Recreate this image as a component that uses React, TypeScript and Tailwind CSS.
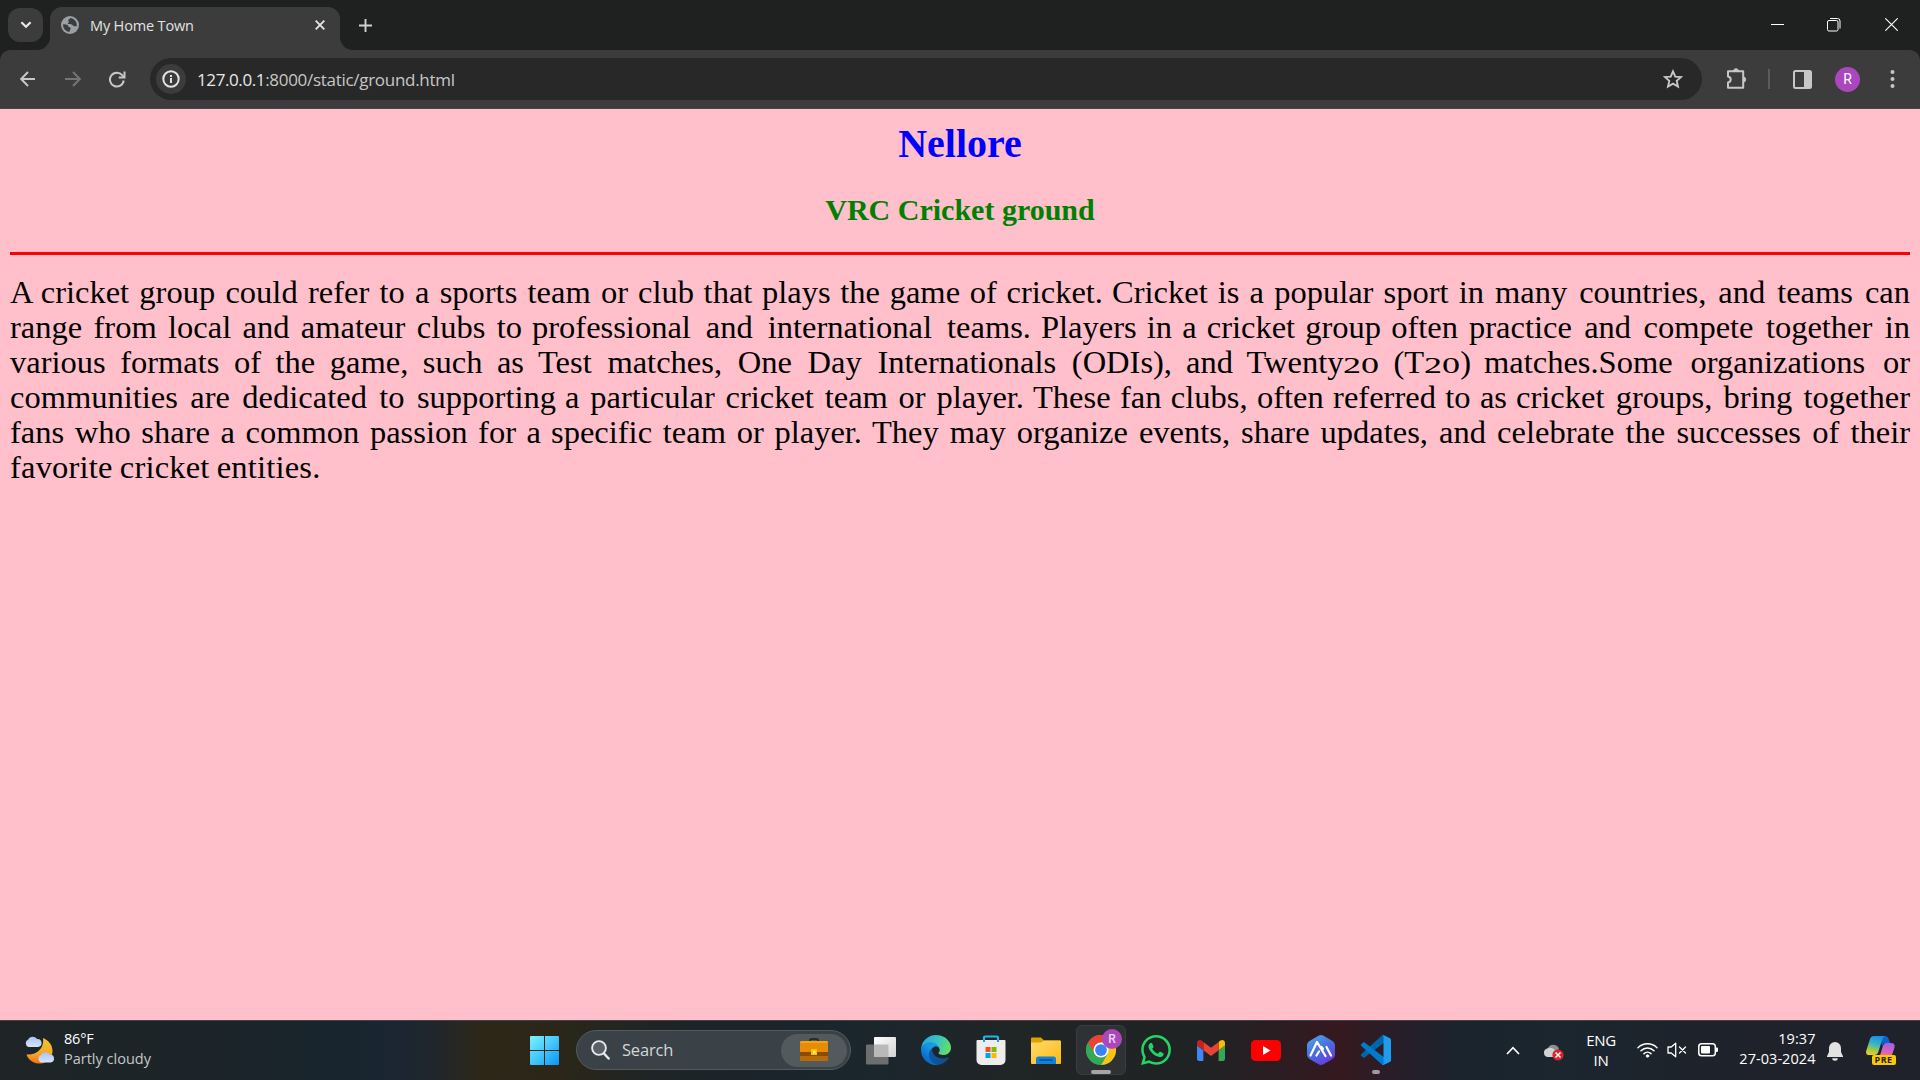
import React from "react";

type Segment = { cls: string; text: React.ReactNode };

const lines: Segment[][] = [
  [
    { cls: "w-[618px] mr-[10px]", text: <><span className="mr-[-3px]">A</span> cricket group could refer to a sports team or </> },
    { cls: "w-[465px] mr-[9px]", text: "club that plays the game of cricket. " },
    { cls: "w-[372px] mr-[11px]", text: "Cricket is a popular sport in " },
    { cls: "flex-1", text: "many countries, and teams can" },
  ],
  [
    { cls: "w-[512px] mr-[10px]", text: "range from local and amateur clubs to " },
    { cls: "w-[499px] mr-[10px]", text: "professional and international teams. " },
    { cls: "w-[417px] mr-[11px]", text: "Players in a cricket group often " },
    { cls: "flex-1", text: "practice and compete together in" },
  ],
  [
    { cls: "w-[514px] mr-[14px]", text: "various formats of the game, such as " },
    { cls: "w-[634px] mr-[14px]", text: "Test matches, One Day Internationals (ODIs), " },
    { cls: "w-[285px] mr-[13px]", text: <>and Twenty<Old /> (T<Old />) </> },
    { cls: "flex-1", text: "matches.Some organizations or" },
  ],
  [
    { cls: "w-[546px] mr-[9px]", text: "communities are dedicated to supporting " },
    { cls: "w-[459px] mr-[9px]", text: "a particular cricket team or player. " },
    { cls: "w-[474px] mr-[9px]", text: "These fan clubs, often referred to as " },
    { cls: "flex-1", text: "cricket groups, bring together" },
  ],
  [
    { cls: "w-[531px] mr-[10px]", text: "fans who share a common passion for a " },
    { cls: "w-[311px] mr-[10px]", text: "specific team or player. " },
    { cls: "w-[556px] mr-[11px]", text: "They may organize events, share updates, " },
    { cls: "flex-1", text: "and celebrate the successes of their" },
  ],
];

function Old() {
  return <span className="inline-block w-[36px] origin-bottom-left text-left [text-align-last:left]"><span className="inline-block origin-left scale-x-150 text-[24px] leading-none">20</span></span>;
}

function TabStrip() {
  return (
    <div className="flex h-[50px] bg-[#1f2120] pl-2">
      <div className="mt-2 flex h-[34px] w-[35px] items-center justify-center rounded-xl bg-[#3c3c3c]">
        <svg width="12" height="8" viewBox="0 0 12 8" fill="none" stroke="#e8e8e8" strokeWidth="2.2"><path d="M1.4 1.2 6 5.8l4.6-4.6" /></svg>
      </div>
      <div className="relative ml-[7px] mt-[7px] flex h-[43px] w-[290px] items-center rounded-t-[12px] bg-[#3c3c3c] pb-[7px] pl-[11px] pr-[15px]">
        <svg className="absolute -left-[13px] bottom-0" width="13" height="13"><path d="M13 0v13H0A13 13 0 0 0 13 0Z" fill="#3c3c3c" /></svg>
        <svg className="absolute -right-[13px] bottom-0" width="13" height="13"><path d="M0 0v13h13A13 13 0 0 1 0 0Z" fill="#3c3c3c" /></svg>
        <svg width="18" height="18" viewBox="0 0 18 18">
          <circle cx="9" cy="9" r="9" fill="#9aa0a6" />
          <path d="M2 8.3c2 .1 3.4-.1 4.7 1 .8.8.6 1.8 1.8 2 1 .2 1.400.7 1 1.700-.4 1-1 1.700-1 3A7.200 7.200 0 0 1 2 8.300ZM9.200 2c-.2 1.300-2 1-2 2.300 0 1 .8 1.200.6 2-.2.700-1.300.6-1 1.400.4 1 2.700.3 3.900.8 1.300.6 1.300 1.800 2.700 1.800 1 0 1.800-.3 2.500-.1A7.200 7.200 0 0 0 9.200 2Z" fill="#3c3c3c" />
        </svg>
        <span className="ml-[11px] mt-[2px] flex-1 whitespace-nowrap text-[14.500px] tracking-[-0.15px] text-[#e3e3e3]">My Home Town</span>
        <svg width="10" height="10" viewBox="0 0 10 10" stroke="#e3e3e3" strokeWidth="1.900"><path d="m.7.7 8.600 8.600M9.300.7.7 9.300" /></svg>
      </div>
      <svg className="ml-[19px] mt-[19px]" width="13" height="13" viewBox="0 0 13 13" stroke="#d0d0d0" strokeWidth="1.900"><path d="M6.500 0v13M0 6.500h13" /></svg>
      <div className="ml-auto flex items-start">
        <svg className="mr-[43px] mt-[24px]" width="13" height="1"><path d="M0 0h13v1H0z" fill="#fff" /></svg>
        <svg className="mr-[44px] mt-[18px]" width="14" height="14" viewBox="0 0 14 14" fill="none" stroke="#fff" strokeWidth="1"><rect x=".5" y="2.500" width="10.500" height="10.500" rx="1.500" /><path d="M3 .5h7.500a2.500 2.500 0 0 1 2.500 2.500v7.500" /></svg>
        <svg className="mr-[22px] mt-[18px]" width="13" height="13" viewBox="0 0 13 13" stroke="#fff" strokeWidth="1.100"><path d="m.3.3 12.400 12.400M12.700.3.3 12.700" /></svg>
      </div>
    </div>
  );
}

function Toolbar() {
  return (
    <div className="bg-[#1f2120]">
      <div className="flex h-[59px] items-center rounded-t-[10px] border-b border-[#464646] bg-[#3c3c3c] pl-5">
        <svg width="16" height="16" viewBox="0 0 16 16" fill="none" stroke="#c7c7c7" strokeWidth="2"><path d="M15 8H1.500M8 1 1.200 8 8 15" /></svg>
        <svg className="ml-[29px]" width="16" height="16" viewBox="0 0 16 16" fill="none" stroke="#757575" strokeWidth="2"><path d="M0 8h14.500M8 1l6.800 7L8 15" /></svg>
        <svg className="ml-[28px]" width="17" height="17" viewBox="0 0 17 17" fill="none" stroke="#c7c7c7" strokeWidth="2"><path d="M14.700 9.500A6.900 6.900 0 1 1 13.200 4.200L15 6.200" /><path d="M15.500.5v6H9.800" /></svg>
        <div className="ml-6 flex h-[42px] w-[1552px] items-center rounded-full bg-[#282828] pl-[6px] pr-[19px]">
          <div className="flex h-[30px] w-[30px] items-center justify-center rounded-full bg-[#3c3c3c]">
            <svg width="18" height="18" viewBox="0 0 18 18" fill="none" stroke="#e3e3e3" strokeWidth="2"><circle cx="9" cy="9" r="7.700" /><path d="M9 8v5M9 5v2" /></svg>
          </div>
          <span className="ml-[11px] mt-px flex-1 whitespace-nowrap text-[17px] tracking-[-0.29px] text-[#c7c7c7]"><span className="tracking-[-0.4px] text-[#e8e8e8]">127.0.0.1</span>:8000/static/ground.html</span>
          <svg width="20" height="20" viewBox="0 0 20 20" fill="none" stroke="#c7c7c7" strokeWidth="1.900"><path d="m10 2.300 2.300 5.300 5.700.5-4.300 3.800 1.300 5.700-5-3-5 3 1.300-5.700L2 8.100l5.700-.5z" /></svg>
        </div>
        <svg className="ml-6" width="22" height="22" viewBox="0 0 22 22" fill="none" stroke="#c7c7c7" strokeWidth="2"><path d="M2 3.200h15.200v16.600H2v-5.300c3.600-.6 3.600-5.400 0-6z" strokeLinejoin="round" /><path d="M7.500 3a2.500 2.200 0 0 1 5 0zM17.500 9a2.200 2.500 0 0 1 0 5z" fill="#c7c7c7" strokeWidth="1" /></svg>
        <div className="ml-[20px] h-5 w-[2px] bg-[#5c5c5c]" />
        <svg className="ml-[23px]" width="19" height="19" viewBox="0 0 19 19"><rect x="1" y="1" width="17" height="17" rx="1.500" fill="none" stroke="#c7c7c7" strokeWidth="2" /><path d="M11 1h7v17h-7z" fill="#c7c7c7" /></svg>
        <div className="ml-[23px] flex h-[25px] w-[25px] items-center justify-center rounded-full bg-[#ab47bc] font-[Roboto] text-[14px] text-white">R</div>
        <svg className="ml-[30px]" width="5" height="18" viewBox="0 0 5 18" fill="#c7c7c7"><circle cx="2.500" cy="2" r="2" /><circle cx="2.500" cy="9" r="2" /><circle cx="2.500" cy="16" r="2" /></svg>
      </div>
    </div>
  );
}

function Page() {
  return (
    <main className="h-[911px] bg-[#ffc0cb] px-[10px] font-['Liberation_Serif',serif] text-black">
      <h1 className="pt-[12px] text-center text-[40px] font-bold leading-[46px] text-[#0000ff]">Nellore</h1>
      <h2 className="mt-[26px] text-center text-[30px] font-bold leading-[34px] text-[#008000]">VRC Cricket ground</h2>
      <div className="mt-[25px] h-[3px] bg-[#ff0000]" />
      <div className="mt-5 text-[32.5px] leading-[35px]">
        {lines.map((segments, i) => (
          <div key={i} className="flex h-[35px]">
            {segments.map((s, j) => (
              <div key={j} className={`shrink-0 whitespace-nowrap text-justify [text-align-last:justify] ${s.cls}`}>{s.text}</div>
            ))}
          </div>
        ))}
        <div className="h-[35px] tracking-[0.2px] [word-spacing:-1.2px]">favorite cricket entities.</div>
      </div>
    </main>
  );
}

function Slot({ children }: { children: React.ReactNode }) {
  return <div className="flex h-full w-[55px] shrink-0 items-center justify-center">{children}</div>;
}

function Weather() {
  return (
    <svg width="31" height="30" viewBox="0 0 31 30">
      <defs>
        <linearGradient id="moon" x1="0" y1="0" x2="0" y2="1"><stop stopColor="#f0c52f" /><stop offset=".6" stopColor="#f3aa2c" /><stop offset="1" stopColor="#f0701a" /></linearGradient>
        <linearGradient id="cloud" x1="0" y1="0" x2="0" y2="1"><stop stopColor="#a8c4f5" /><stop offset="1" stopColor="#d6e4fb" /></linearGradient>
      </defs>
      <path d="M19 3C26 6 30 12 28 19.500 25.500 28 16 30.500 9 27 5.500 25.200 3.500 22.500 2.500 19.500 13 20.500 20.500 13 19 3Z" fill="url(#moon)" />
      <path d="M4.500 12a4 4 0 0 1-.3-7.500A5.200 5.200 0 0 1 13 4a4 4 0 0 1 1 8Z" fill="url(#cloud)" />
      <path d="M17 27.500a4 4 0 0 1 0-7.500 5 5 0 0 1 8.500-.5 4 4 0 0 1 1 8Z" fill="url(#cloud)" />
    </svg>
  );
}

function Windows() {
  return (
    <svg width="29" height="29" viewBox="0 0 29 29">
      <defs><linearGradient id="win" gradientUnits="userSpaceOnUse" x1="0" y1="0" x2="29" y2="29"><stop stopColor="#7df2ff" /><stop offset=".5" stopColor="#43c8fb" /><stop offset="1" stopColor="#0a93f5" /></linearGradient></defs>
      <path d="M1 0h13v14H0V1a1 1 0 0 1 1-1ZM15 0h13a1 1 0 0 1 1 1v13H15ZM0 15h14v14H1a1 1 0 0 1-1-1ZM15 15h14v13a1 1 0 0 1-1 1H15Z" fill="url(#win)" />
    </svg>
  );
}

function SearchBox() {
  return (
    <div className="ml-1 flex h-10 w-[275px] shrink-0 items-center rounded-full border border-[#535a5e] bg-[#3b4247] pl-[14px] pr-[3px]">
      <svg width="19" height="20" viewBox="0 0 19 20" fill="none" stroke="#e6e8ea"><circle cx="8" cy="8" r="6.900" strokeWidth="1.900" fill="#596066" /><path d="m13 13.500 4.600 5" strokeWidth="2.500" strokeLinecap="round" /></svg>
      <span className="ml-[12px] mt-px flex-1 text-[16.500px] tracking-[-0.2px] text-[#d3d6d8]">Search</span>
      <div className="flex h-[33px] w-[66px] items-center justify-center rounded-full bg-[#535a5e]">
        <svg width="28" height="24" viewBox="0 0 28 24">
          <path d="M10 4V2.500Q10 1 11.500 1h5Q18 1 18 2.500V4" fill="none" stroke="#2b2b2b" strokeWidth="2" />
          <rect y="3" width="28" height="20" rx="1.500" fill="#a65f08" />
          <path d="M1 3h26l1 1v10H0V4z" fill="#e88b05" /><path d="M1 3h26l1 2H0z" fill="#f5a416" /><path d="M0 14h28v4H0z" fill="#8a4b04" /><path d="M0 18h28v4l-1 1H1l-1-1z" fill="#b66a0c" />
          <rect x="11" y="11" width="6" height="6" fill="#f4c800" /><rect x="13" y="13" width="2.500" height="2.500" fill="#fff07a" />
        </svg>
      </div>
    </div>
  );
}

function TaskView() {
  return (
    <svg width="30" height="29" viewBox="0 0 30 29">
      <defs><linearGradient id="tv" x1="0" y1="0" x2="1" y2="1"><stop stopColor="#fff" /><stop offset="1" stopColor="#d2d2d2" /></linearGradient></defs>
      <rect y="8.500" width="22.500" height="20" rx="1" fill="#6e6e6e" />
      <rect x="8" y="1" width="22" height="20" rx="1" fill="url(#tv)" />
      <path d="M8 8.500h14.500V21H8z" fill="#b9b9b9" />
    </svg>
  );
}

function Edge() {
  return (
    <svg width="30" height="30" viewBox="0 0 256 256">
      <defs>
        <linearGradient id="e1" x1="63" y1="177" x2="241" y2="177" gradientUnits="userSpaceOnUse"><stop stopColor="#0c59a4" /><stop offset="1" stopColor="#114a8b" /></linearGradient>
        <linearGradient id="e2" x1="157" y1="99" x2="46" y2="221" gradientUnits="userSpaceOnUse"><stop stopColor="#1b9de2" /><stop offset=".4" stopColor="#1595df" /><stop offset="1" stopColor="#0a68c8" /></linearGradient>
        <linearGradient id="e3" x1="10" y1="40" x2="250" y2="130" gradientUnits="userSpaceOnUse"><stop stopColor="#2ba6e5" /><stop offset=".45" stopColor="#35c1c5" /><stop offset="1" stopColor="#66e25c" /></linearGradient>
      </defs>
      <path d="M231 190a94 94 0 0 1-10.500 4.700 102 102 0 0 1-36 6.500c-47.500 0-88.800-32.700-88.800-74.600a31.500 31.500 0 0 1 16.400-27.300c-43 1.800-54 46.600-54 72.800 0 74.100 68.300 81.600 83 81.600 8 0 20-2.300 27.100-4.600l1.400-.4a128 128 0 0 0 66.600-52.800 4 4 0 0 0-5.200-5.900Z" fill="url(#e1)" />
      <path d="M105.700 241.400a79 79 0 0 1-22.700-21.300 80.700 80.700 0 0 1 29.100-120.800c3.100-1.500 8.500-4.100 15.600-4a32.400 32.400 0 0 1 25.700 13 31.900 31.900 0 0 1 6.300 18.700c0-.2 24.500-79.600-80-79.600-43.900 0-80 41.700-80 78.200A130 130 0 0 0 11.900 182a128 128 0 0 0 156.400 67 75.500 75.500 0 0 1-62.600-7.600Z" fill="url(#e2)" />
      <path d="M152.300 148.900c-.8 1-3.300 2.500-3.300 5.700 0 2.600 1.700 5.200 4.700 7.300 14.400 10 41.500 8.700 41.600 8.700a59.600 59.600 0 0 0 30.300-8.400 61.400 61.400 0 0 0 30.400-52.900c.3-22.400-8-37.300-11.300-43.900C223.500 23.900 177.700 0 128 0A128 128 0 0 0 0 126.200c.5-36.500 36.800-66 80-66 3.500 0 23.500.3 42 10a72.600 72.600 0 0 1 30.900 29.300c6.100 10.600 7.200 24.100 7.200 29.500s-2.700 13.300-7.800 19.900Z" fill="url(#e3)" />
    </svg>
  );
}

function Store() {
  return (
    <svg className="mr-px" width="30" height="30" viewBox="0 0 30 30">
      <path d="M8 7V2.500Q8 1.500 9 1.500h12q1 0 1 1V7" fill="none" stroke="#24b4e8" strokeWidth="2.200" />
      <path d="M1.500 5h27a1 1 0 0 1 1 1v19a5 5 0 0 1-5 5h-19a5 5 0 0 1-5-5V6a1 1 0 0 1 1-1Z" fill="#ededed" />
      <path d="M8 7V5M22 7V5" stroke="#2399d5" strokeWidth="2" />
      <path d="M9.500 12h5v5h-5z" fill="#f25022" /><path d="M15.500 12h5v5h-5z" fill="#7fba00" /><path d="M9.500 18h5v5h-5z" fill="#00a4ef" /><path d="M15.500 18h5v5h-5z" fill="#ffb900" />
    </svg>
  );
}

function Folder() {
  return (
    <svg width="30" height="27" viewBox="0 0 30 27">
      <defs><linearGradient id="fo" x1="0" y1="0" x2="1" y2="1"><stop stopColor="#ffdc6a" /><stop offset="1" stopColor="#fbb917" /></linearGradient></defs>
      <path d="M0 1.500Q0 .5 1 .5h9l3 3h16v6H0z" fill="#e0a000" />
      <path d="M0 5.500h10l3-2h16q1 0 1 1V26q0 1-1 1H1q-1 0-1-1z" fill="url(#fo)" />
      <path d="M5 27v-5q0-2.500 2.500-2.500h15Q25 19.500 25 22v5z" fill="#1281d6" /><path d="M9 23h12" stroke="#0b4f92" strokeWidth="1.500" strokeLinecap="round" />
    </svg>
  );
}

function Chrome() {
  return (
    <div className="relative flex h-[50px] w-[50px] items-center justify-center rounded-md border border-[#3a3d40] bg-[#2f3235]">
      <svg width="30" height="30" viewBox="0 0 48 48">
        <circle cx="24" cy="24" r="24" fill="#34a853" />
        <path d="M24 24 3.200 12A24 24 0 0 1 44.800 12Z" fill="#ea4335" />
        <path d="M24 12h20.800A24 24 0 0 1 24 48L34.400 30Z" fill="#fbc116" />
        <path d="M3.200 12 13.600 30 24 24V12Z" fill="#ea4335" />
        <path d="M3.200 12 13.600 30l10.400 6 10.400-6L24 48A24 24 0 0 1 3.200 12Z" fill="#34a853" />
        <circle cx="24" cy="24" r="12" fill="#fff" /><circle cx="24" cy="24" r="9.400" fill="#3b82f6" />
      </svg>
      <div className="absolute left-[25px] top-[3px] flex h-5 w-5 items-center justify-center rounded-full bg-[#ab47bc] font-[Roboto] text-[12px] font-medium text-[#ecd6f0]">R</div>
      <div className="absolute bottom-0 left-[14px] h-1 w-5 rounded-full bg-[#a6a7a5]" />
    </div>
  );
}

function WhatsApp() {
  return (
    <svg width="30" height="30" viewBox="0 0 24 24" fill="#25d366"><path d="M17.472 14.382c-.297-.149-1.758-.867-2.030-.967-.273-.099-.471-.148-.670.150-.197.297-.767.966-.940 1.164-.173.199-.347.223-.644.075-.297-.150-1.255-.463-2.390-1.475-.883-.788-1.480-1.761-1.653-2.059-.173-.297-.018-.458.130-.606.134-.133.298-.347.446-.520.149-.174.198-.298.298-.497.099-.198.050-.371-.025-.520-.075-.149-.669-1.612-.916-2.207-.242-.579-.487-.500-.669-.510-.173-.008-.371-.010-.570-.010-.198 0-.520.074-.792.372-.272.297-1.040 1.016-1.040 2.479 0 1.462 1.065 2.875 1.213 3.074.149.198 2.096 3.200 5.077 4.487.709.306 1.262.489 1.694.625.712.227 1.360.195 1.871.118.571-.085 1.758-.719 2.006-1.413.248-.694.248-1.289.173-1.413-.074-.124-.272-.198-.570-.347m-5.421 7.403h-.004a9.870 9.870 0 0 1-5.031-1.378l-.361-.214-3.741.982.998-3.648-.235-.374a9.860 9.860 0 0 1-1.510-5.260c.001-5.450 4.436-9.884 9.888-9.884 2.640 0 5.122 1.030 6.988 2.898a9.825 9.825 0 0 1 2.893 6.994c-.003 5.450-4.437 9.884-9.885 9.884m8.413-18.297A11.815 11.815 0 0 0 12.050 0C5.495 0 .160 5.335.157 11.892c0 2.096.547 4.142 1.588 5.945L.057 24l6.305-1.654a11.882 11.882 0 0 0 5.683 1.448h.005c6.554 0 11.890-5.335 11.893-11.893a11.821 11.821 0 0 0-3.480-8.413Z" /></svg>
  );
}

function Gmail() {
  return (
    <svg width="28" height="21" viewBox="52 42 88 66">
      <path fill="#4285f4" d="M58 108h14V74L52 59v43c0 3.300 2.700 6 6 6" /><path fill="#34a853" d="M120 108h14c3.300 0 6-2.700 6-6V59l-20 15" /><path fill="#fbbc04" d="M120 48v26l20-15v-8c0-7.400-8.500-11.600-14.400-7.200" /><path fill="#ea4335" d="M72 74V48l24 18 24-18v26L96 92" /><path fill="#c5221f" d="M52 51v8l20 15V48l-5.600-4.200C60.500 39.400 52 43.600 52 51" />
    </svg>
  );
}

function YouTube() {
  return <svg width="30" height="21" viewBox="0 0 30 21"><rect width="30" height="21" rx="4.500" fill="#f00" /><path d="m12 6 7.500 4.500L12 15z" fill="#fff" /></svg>;
}

function HexApp() {
  return (
    <svg width="28" height="30" viewBox="0 0 28 30">
      <defs><linearGradient id="hx" x1=".2" y1="0" x2=".8" y2="1"><stop stopColor="#4fa3e8" /><stop offset=".5" stopColor="#4a6be0" /><stop offset="1" stopColor="#6a35e0" /></linearGradient></defs>
      <path d="M11.500.8a5 5 0 0 1 5 0l9 5.200A5 5 0 0 1 28 10v10a5 5 0 0 1-2.500 4l-9 5.200a5 5 0 0 1-5 0l-9-5.200A5 5 0 0 1 0 20V10a5 5 0 0 1 2.500-4Z" fill="url(#hx)" />
      <path d="m3.500 20.500 6.500-13.500 8.500 14M9.500 20.500l2.500-4M14.500 12l1.500 2M19.500 12l4.500 8.500" fill="none" stroke="#fff" strokeWidth="2.200" strokeLinecap="round" strokeLinejoin="round" />
    </svg>
  );
}

function VSCode() {
  return (
    <div className="relative flex h-[50px] items-center">
      <svg width="30" height="30" viewBox="0 0 100 100">
        <path d="M96.500 10.800 75.900.9a6.200 6.200 0 0 0-7.100 1.200L1.300 63.600a4.200 4.200 0 0 0 0 6.200l5.500 5a4.200 4.200 0 0 0 5.300.2L93.400 13.400a4.100 4.100 0 0 1 6.600 3.300v-.2a6.200 6.200 0 0 0-3.500-5.700Z" fill="#0065a9" />
        <path d="m96.500 89.200-20.600 9.900a6.200 6.200 0 0 1-7.100-1.200L1.300 36.400a4.200 4.200 0 0 1 0-6.200l5.500-5a4.200 4.200 0 0 1 5.300-.2l81.300 61.600a4.100 4.100 0 0 0 6.600-3.300v.2a6.200 6.200 0 0 1-3.500 5.700Z" fill="#007acc" />
        <path d="M75.900 99.100a6.200 6.200 0 0 1-7.100-1.200c2.300 2.300 6.200.7 6.200-2.600V4.700c0-3.300-3.900-4.900-6.200-2.600A6.200 6.200 0 0 1 75.900.9l20.600 9.900a6.200 6.200 0 0 1 3.500 5.700v67a6.200 6.200 0 0 1-3.500 5.700Z" fill="#1f9cf0" />
      </svg>
      <div className="absolute bottom-px left-[11px] h-1 w-2 rounded-full bg-[#a09a9e]" />
    </div>
  );
}

function Tray() {
  return (
    <div className="flex h-full flex-1 items-center text-white">
      <svg className="ml-[102px]" width="14" height="9" viewBox="0 0 14 9" fill="none" stroke="#fff" strokeWidth="1.800"><path d="m1 8 6-6.300L13 8" /></svg>
      <svg className="ml-[23px] mt-[4px]" width="21" height="19" viewBox="0 0 21 19">
        <path d="M5 5a6 6 0 0 1 11 1l-6 6z" fill="#8c8f91" /><path d="M4 14a4.500 4.500 0 0 1 0-8.500 6 6 0 0 1 8.500 3L14 14Z" fill="#d0d2d4" />
        <circle cx="15" cy="12" r="5.600" fill="#d9232e" /><path d="m12.500 9.500 5 5m0-5-5 5" stroke="#fff" strokeWidth="1.500" />
      </svg>
      <div className="mb-px ml-[22px] w-[31px] text-center text-[15px] leading-5 tracking-[-0.3px]">ENG<br />IN</div>
      <svg className="ml-[20px]" width="21" height="16" viewBox="0 0 21 16" fill="none" stroke="#fff" strokeWidth="1.500" strokeLinecap="round"><path d="M1 5.700a13.300 13.300 0 0 1 19 0M4 8.800a9 9 0 0 1 13 0M7 11.600a5 5 0 0 1 7 0" /><circle cx="10.500" cy="14" r="1.300" fill="#fff" strokeWidth=".8" /></svg>
      <svg className="ml-[9px]" width="20" height="16" viewBox="0 0 20 16" fill="none" stroke="#fff" strokeWidth="1.300" strokeLinejoin="round"><path d="M1 5h3.200L8.700 1.200v13.600L4.200 11H1z" /><path d="m12.500 5 6 6m0-6-6 6" strokeLinecap="round" /></svg>
      <svg className="ml-[11px]" width="21" height="14" viewBox="0 0 21 14"><rect x=".8" y=".8" width="16.500" height="12" rx="2.800" fill="none" stroke="#fff" strokeWidth="1.500" /><rect x="3" y="3" width="9" height="7.600" rx="1" fill="#fff" /><path d="M18 4.500h1q1 0 1 1v2.600q0 1-1 1h-1z" fill="#fff" /></svg>
      <div className="mb-[2px] ml-[16px] w-[81px] whitespace-nowrap text-right text-[14.500px] leading-5 tracking-[0.05px]">19:37<br />27-03-2024</div>
      <svg className="ml-[11px] mt-[2px]" width="16" height="19" viewBox="0 0 16 19" fill="#e2e2e2"><path d="M8 0a6 6 0 0 1 6 6v4l2 4.200V15H0v-.8L2 10V6a6 6 0 0 1 6-6ZM5.200 16.200h5.600a2.800 2.500 0 0 1-5.600 0Z" /></svg>
      <div className="relative ml-[23px] mt-px h-[30px] w-[30px]">
        <svg width="30" height="26" viewBox="0 0 30 26">
          <defs>
            <linearGradient id="c1" x1=".6" y1="0" x2=".3" y2="1"><stop stopColor="#1b8ee8" /><stop offset=".4" stopColor="#2fb5c8" /><stop offset=".75" stopColor="#a4c84a" /><stop offset="1" stopColor="#f0cc20" /></linearGradient>
            <linearGradient id="c2" x1=".6" y1="0" x2=".4" y2="1"><stop stopColor="#9c62ee" /><stop offset=".6" stopColor="#e060b8" /><stop offset="1" stopColor="#f58a60" /></linearGradient>
          </defs>
          <path d="M14 0h5q3 0 4 4l1 3h-4q-3 0-4 3z" fill="#1560c8" />
          <path d="M8 0h11q-2 1-3 4l-3.500 11.500Q11.500 19 8 19H3.500Q-.8 19 .3 14.500L4 3Q5 0 8 0Z" fill="url(#c1)" />
          <path d="M20 7h5q4.500 0 3.500 4.500L25 22H11q2.500-1 3.500-4l2.500-8.500Q18 7 20 7Z" fill="url(#c2)" />
        </svg>
        <div className="absolute left-[6px] top-[19px] flex h-[10px] w-[24px] items-center justify-center rounded-[2px] bg-[#fcc803] text-[9px] font-bold leading-none tracking-[0.4px] text-[#2a2205]">PRE</div>
      </div>
    </div>
  );
}

function Taskbar() {
  return (
    <footer className="flex h-[60px] items-center border-t border-[#3d4447] bg-[linear-gradient(90deg,#1f2526_0px,#1b242a_250px,#18252e_340px,#1b2632_400px,#22262a_440px,#2d2718_480px,#2b2618_560px,#1f2526_650px,#1b242b_760px,#1b262d_880px,#202526_1000px,#202324_1200px,#2a1d22_1270px,#35191f_1340px,#271e2a_1400px,#1b242d_1460px,#1b262e_1560px,#1f222b_1750px,#1f222b_1920px)] pb-px">
      <div className="flex w-[517px] shrink-0 items-center pl-6">
        <Weather />
        <div className="mb-[2px] ml-[9px] text-[14.500px] leading-5 text-white"><span className="tracking-[-0.2px]">86°F</span><br /><span className="text-[#c5c8c9]">Partly cloudy</span></div>
      </div>
      <Slot><Windows /></Slot>
      <SearchBox />
      <div className="ml-[2.500px] flex h-full shrink-0">
        <Slot><TaskView /></Slot><Slot><Edge /></Slot><Slot><Store /></Slot><Slot><Folder /></Slot><Slot><Chrome /></Slot>
        <Slot><WhatsApp /></Slot><Slot><Gmail /></Slot><Slot><YouTube /></Slot><Slot><HexApp /></Slot><Slot><VSCode /></Slot>
      </div>
      <Tray />
    </footer>
  );
}

export default function App() {
  return (
    <div className="flex h-[1080px] w-[1920px] flex-col overflow-hidden font-['Open_Sans','Noto_Sans',sans-serif]">
      <TabStrip />
      <Toolbar />
      <Page />
      <Taskbar />
    </div>
  );
}
